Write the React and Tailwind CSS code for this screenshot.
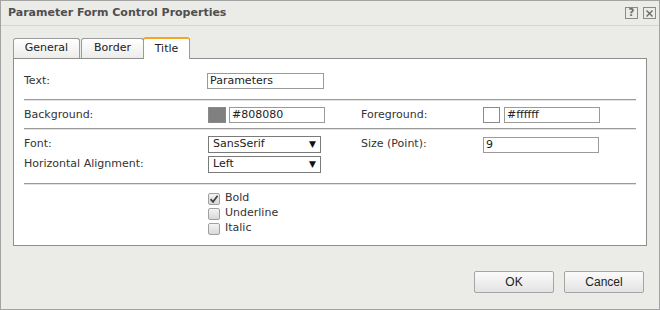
import React from "react";

const font = { fontFamily: '"DejaVu Sans", Verdana, sans-serif' };

function Sep() {
  return (
    <div className="mr-[10px]">
      <div className="h-px bg-[#9a9a9a]" />
      <div className="h-px bg-[#e2e2e2]" />
    </div>
  );
}

function Input({ value, className = "" }) {
  return (
    <div className={"h-[16px] border border-[#9b9b9b] bg-white pl-[2px] text-[11px] leading-[14px] text-[#222] " + className}>
      {value}
    </div>
  );
}

function Select({ value }) {
  return (
    <div className="flex h-[17px] w-[113px] items-center justify-between border border-[#7a7a7a] bg-white pl-[4px] pr-[4px] text-[11px] text-[#222]">
      <span>{value}</span>
      <span className="text-[9px] leading-none text-[#111]">▼</span>
    </div>
  );
}

function Check({ checked, label }) {
  return (
    <div className="flex h-[15px] items-center gap-[5px]">
      <div className="flex h-[12px] w-[12px] items-center justify-center rounded-[2px] border border-[#a0a0a0] bg-gradient-to-b from-[#f4f4f4] to-[#d8d8d8]">
        {checked && (
          <svg width="10" height="10" viewBox="0 0 10 10">
            <path d="M1.5 5.2 L4 7.8 L8.6 1.8" fill="none" stroke="#444" strokeWidth="1.8" />
          </svg>
        )}
      </div>
      <span className="text-[11px] text-[#333]">{label}</span>
    </div>
  );
}

export default function App() {
  return (
    <div style={font} className="flex h-[310px] w-[660px] flex-col border border-[#a3a3a3] bg-[#ebebe8] text-[#333]">
      <div className="flex h-[25px] items-center justify-between border-b border-[#d5d5d2] pl-[7px] pr-[3px]">
        <span className="text-[11px] font-bold text-[#4f4f4f]">Parameter Form Control Properties</span>
        <div className="flex items-center gap-[5px]">
          <div className="flex h-[12px] w-[13px] items-center justify-center border border-[#8a8a8a] text-[10px] font-bold leading-none text-[#6a6a6a]">?</div>
          <div className="flex h-[12px] w-[13px] items-center justify-center border border-[#8a8a8a]">
            <svg width="9" height="9" viewBox="0 0 9 9">
              <path d="M1.5 1.5 L7.5 7.5 M7.5 1.5 L1.5 7.5" stroke="#6a6a6a" strokeWidth="1.4" />
            </svg>
          </div>
        </div>
      </div>

      <div className="flex flex-col px-[12px] pt-[11px]">
        <div className="flex h-[21px] items-end">
          <div className="flex h-[20px] w-[67px] items-center justify-center rounded-t-[3px] border border-b-0 border-[#9b9b9b] bg-gradient-to-b from-[#ffffff] to-[#ececea] text-[11px] text-[#222]">General</div>
          <div className="ml-[1px] flex h-[20px] w-[63px] items-center justify-center rounded-t-[3px] border border-b-0 border-[#9b9b9b] bg-gradient-to-b from-[#ffffff] to-[#ececea] text-[11px] text-[#222]">Border</div>
          <div className="relative z-10 -mb-px ml-[-1px] flex h-[22px] w-[47px] items-center justify-center rounded-t-[3px] border border-b-0 border-[#9b9b9b] border-t-2 border-t-[#f5a623] bg-white text-[11px] text-[#222]">Title</div>
        </div>
        <div className="h-[188px] border border-[#8f8f8f] bg-white pl-[10px] pt-[14px]">
          <div className="flex h-[16px] items-center">
            <span className="w-[183px] text-[11px]">Text:</span>
            <Input value="Parameters" className="w-[117px]" />
          </div>
          <div className="mt-[10px]"><Sep /></div>
          <div className="mt-[6px] flex h-[16px] items-center">
            <span className="w-[184px] text-[11px]">Background:</span>
            <div className="h-[16px] w-[18px] border border-[#8a8a8a] bg-[#808080]" />
            <Input value="#808080" className="ml-[3px] w-[96px]" />
            <span className="ml-[36px] w-[122px] text-[11px]">Foreground:</span>
            <div className="h-[16px] w-[17px] border border-[#8a8a8a] bg-white" />
            <Input value="#ffffff" className="ml-[4px] w-[96px]" />
          </div>
          <div className="mt-[5px]"><Sep /></div>
          <div className="mt-[6px] flex h-[17px] items-center">
            <span className="w-[184px] text-[11px]">Font:</span>
            <Select value="SansSerif" />
            <span className="ml-[40px] w-[122px] text-[11px]">Size (Point):</span>
            <Input value="9" className="w-[116px]" />
          </div>
          <div className="mt-[3px] flex h-[17px] items-center">
            <span className="w-[184px] text-[11px]">Horizontal Alignment:</span>
            <Select value="Left" />
          </div>
          <div className="mt-[10px]"><Sep /></div>
          <div className="ml-[184px] mt-[6px] flex flex-col">
            <Check checked label="Bold" />
            <Check label="Underline" />
            <Check label="Italic" />
          </div>
        </div>
      </div>

      <div className="flex justify-end gap-[10px] pr-[15px] pt-[25px]">
        <button style={{ fontFamily: '"Liberation Sans", Arial, sans-serif' }} className="h-[22px] w-[80px] rounded-[2px] border border-[#a5a5a5] bg-gradient-to-b from-[#fbfbfb] to-[#e3e3e3] text-[12px] text-[#222]">OK</button>
        <button style={{ fontFamily: '"Liberation Sans", Arial, sans-serif' }} className="h-[22px] w-[80px] rounded-[2px] border border-[#a5a5a5] bg-gradient-to-b from-[#fbfbfb] to-[#e3e3e3] text-[12px] text-[#222]">Cancel</button>
      </div>
    </div>
  );
}
